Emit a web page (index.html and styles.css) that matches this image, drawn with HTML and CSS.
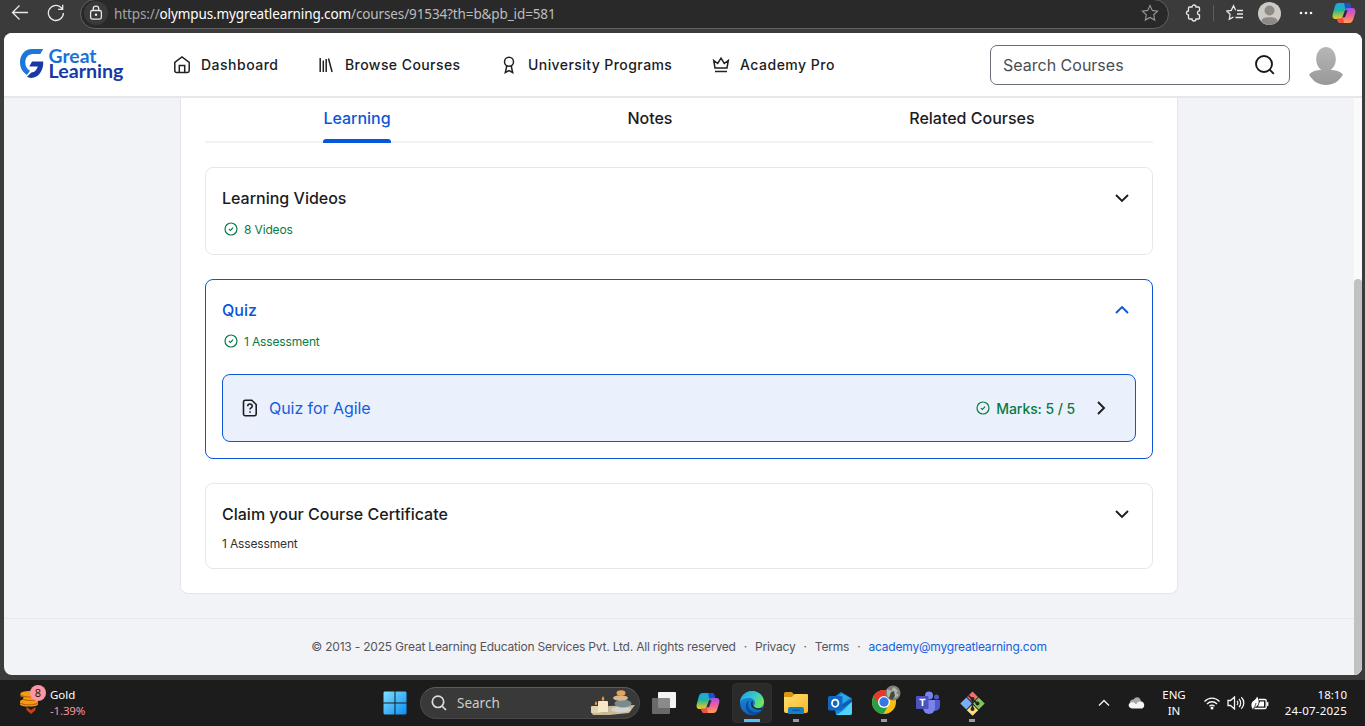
FILE: index.html
```html
<!DOCTYPE html>
<html lang="en">
<head>
<meta charset="utf-8">
<title>Great Learning</title>
<link rel="stylesheet" href="styles.css">
</head>
<body>
<svg width="0" height="0" class="defs">
  <defs>
    <linearGradient id="lg-blue" x1="0" y1="0" x2="0" y2="1"><stop offset="0" stop-color="#1b7fe0"/><stop offset="1" stop-color="#1668cf"/></linearGradient>
    <linearGradient id="win" x1="0" y1="0" x2="1" y2="1"><stop offset="0" stop-color="#7fe0ff"/><stop offset="1" stop-color="#0a8df5"/></linearGradient>
    <linearGradient id="cpA" x1="0" y1="0" x2="0" y2="1"><stop offset="0" stop-color="#17a5f5"/><stop offset=".45" stop-color="#25b59a"/><stop offset="1" stop-color="#f6cf18"/></linearGradient>
    <linearGradient id="cpB" x1="0" y1="0" x2="0" y2="1"><stop offset="0" stop-color="#a352ec"/><stop offset=".5" stop-color="#f1609a"/><stop offset="1" stop-color="#ffa14d"/></linearGradient>
    <linearGradient id="edgeA" x1="0" y1="0" x2="1" y2=".5"><stop offset="0" stop-color="#239be6"/><stop offset=".6" stop-color="#35c8cf"/><stop offset="1" stop-color="#6fe35b"/></linearGradient>
    <linearGradient id="edgeB" x1="0" y1="0" x2="0" y2="1"><stop offset="0" stop-color="#1a8fdd"/><stop offset="1" stop-color="#0d62bd"/></linearGradient>
    <linearGradient id="folder" x1="0" y1="0" x2="1" y2="1"><stop offset="0" stop-color="#ffdf6d"/><stop offset="1" stop-color="#f9b92a"/></linearGradient>
    <symbol id="copilot" viewBox="0 0 24 24">
      <path d="M7 2h8.500c1.500 0 2.300.900 2.800 2.300L19 7h-3c-1.600 0-2.500.900-3 2.500l-2 6C10.400 17.300 9.500 18 8 18H4c-3 0-4-2-3.200-5l2-7.500C3.500 3 4.800 2 7 2z" fill="url(#cpA)"/>
      <path d="M12 2h3.500c1.500 0 2.300.900 2.800 2.300L19 7h-3c-1.200 0-2 .5-2.500 1.500z" fill="#1a4fd0"/>
      <path d="M17 22H8.500c-1.500 0-2.300-.9-2.800-2.300L5 17.500h3c1.600 0 2.500-.9 3-2.500l2-5.500C13.600 7.700 14.500 7 16 7h4c3 0 4 2 3.200 5l-2 6.500C20.500 21 19.200 22 17 22z" fill="url(#cpB)"/>
      <path d="M5 17.500h3c1.300 0 2.200-.7 2.700-1.800L12 22H8.500c-1.500 0-2.300-.9-2.800-2.300z" fill="#ef5340"/>
      <path d="M13.200 9.200h2.400l-2.600 7h-2.500z" fill="#2b2440"/>
    </symbol>
    <symbol id="okay" viewBox="0 0 16 16"><circle cx="8" cy="8" r="6" fill="none" stroke="currentColor" stroke-width="1.200"/><path d="M5.900 8.100l1.500 1.400 2.700-2.800" fill="none" stroke="currentColor" stroke-width="1.200"/></symbol>
    <symbol id="chev" viewBox="0 0 16 16"><path d="M2 5l6 6 6-6" fill="none" stroke="currentColor" stroke-width="1.900"/></symbol>
  </defs>
</svg>

<div class="browser-bar">
  <svg class="back" width="18" height="18" viewBox="0 0 18 18"><path d="M17 8.500H1.500M8.500 1.500l-7 7 7 7"/></svg>
  <svg class="reload" width="18" height="18" viewBox="0 0 18 18"><path d="M16.400 9a7.500 7.500 0 1 1-2.600-5.700l1.900 1.900M15.700.8v4.500h-4.600"/></svg>
  <div class="address">
    <span class="lock"><svg width="14" height="16" viewBox="0 0 14 16"><rect x="1.600" y="5.500" width="10.800" height="8.600" rx="1.800"/><path d="M4.200 5.500V4a2.800 2.800 0 0 1 5.600 0v1.500"/><circle cx="7" cy="9.800" r=".6"/></svg></span>
    <span class="url">https://<b>olympus.mygreatlearning.com</b><i>/courses/91534?th=b&amp;pb_id=581</i></span>
    <svg class="star" width="18" height="18" viewBox="0 0 18 18"><path d="M9 1.500l2.300 4.900 5.300.7-3.900 3.700 1 5.300L9 13.500l-4.700 2.600 1-5.300L1.400 7.100l5.300-.7z"/></svg>
  </div>
  <svg class="puzzle" width="18" height="18" viewBox="0 0 18 18"><path d="M4.500 3H7A2 2 0 0 1 11 3H13.500A1 1 0 0 1 14.500 4V6.800A2 2 0 0 0 14.500 10.800V14A1 1 0 0 1 13.500 15H11A2 2 0 0 1 7 15H4.500A1 1 0 0 1 3.500 14V11A2 2 0 0 1 3.500 7V4A1 1 0 0 1 4.500 3z"/></svg>
  <span class="bar-rule"></span>
  <svg class="favs" width="18" height="18" viewBox="0 0 18 18"><path d="M9.700 6.300L7.500 1.700 5.300 6.300l-4.600.7 3.400 3.300-.8 4.900L7.500 13M11 6.500h6M11 10h6M9.500 13.500H17"/></svg>
  <svg class="profile" width="23" height="23" viewBox="0 0 23 23"><circle cx="11.500" cy="11.500" r="11.500" fill="#cdcac6"/><circle cx="11.500" cy="8.500" r="5" fill="#8e8a86"/><path d="M3.500 19.500c0-3.500 3-4.300 8-4.300s8 .8 8 4.300c-4.500 4.500-11.500 4.500-16 0z" fill="#8e8a86"/></svg>
  <svg class="dots" width="14" height="4" viewBox="0 0 14 4"><circle cx="2" cy="2" r="1.300"/><circle cx="7" cy="2" r="1.300"/><circle cx="12" cy="2" r="1.300"/></svg>
  <svg class="bar-copilot" width="24" height="24"><use href="#copilot"/></svg>
</div>

<div class="page">
  <header class="site-header">
    <svg class="logo" width="106" height="36" viewBox="0 0 106 36">
      <path d="M24.300 1H13C5.500 1 1 7 1 14.300c0 5.500 2.500 10 7 12.700l3-4.300c-3.300-1.800-4.700-4.700-4.700-8.200C6.300 9.500 9.300 6 14 6h7.300z" fill="#1c77d8"/>
      <path d="M13 13.500h11.200c.6 8-4.300 16.500-12 16.500-1.500 0-3-.5-4.200-1.200l4.400-4.200c3.200 0 5.400-2.800 6.400-6h-8.500z" fill="#1739a8"/>
      <text x="29.500" y="14.500" textLength="48" lengthAdjust="spacingAndGlyphs" fill="url(#lg-blue)">Great</text>
      <text x="29.500" y="29.500" textLength="75" lengthAdjust="spacingAndGlyphs" fill="#1739a8">Learning</text>
    </svg>
    <nav class="nav">
      <a><svg width="20" height="20" viewBox="0 0 20 20"><path d="M2.800 7.300L10 2l7.200 5.300v8.500a1.700 1.700 0 0 1-1.700 1.700h-11a1.700 1.700 0 0 1-1.700-1.700zM7.300 17.500v-7h5.400v7"/></svg><span class="n1">Dashboard</span></a>
      <a><svg width="20" height="20" viewBox="0 0 20 20"><path d="M4.200 3v14M7.300 5.500V17M10.200 4v13M12.500 3.500l3.600 13.500"/></svg><span class="n2">Browse Courses</span></a>
      <a><svg width="20" height="20" viewBox="0 0 20 20"><circle cx="10" cy="6.800" r="4.500"/><path d="M7.500 10.600v1.800L6.300 17.500l3.700-2 3.700 2-1.200-5.100v-1.800"/></svg><span class="n3">University Programs</span></a>
      <a><svg width="20" height="20" viewBox="0 0 20 20"><path d="M4 13L2.700 5.500l4 3L10 3.200l3.300 5.300 4-3L16 13zM4 16.500h12"/></svg><span class="n4">Academy Pro</span></a>
    </nav>
    <div class="search"><span>Search Courses</span><svg width="22" height="22" viewBox="0 0 22 22"><circle cx="10" cy="10" r="8"/><path d="M15.800 15.800l4 4"/></svg></div>
    <svg class="avatar" width="36" height="40" viewBox="0 0 36 40"><defs><linearGradient id="av" x1="0" y1="0" x2="0" y2="1"><stop offset="0" stop-color="#b7b7b7"/><stop offset="1" stop-color="#989898"/></linearGradient></defs><path d="M18 1c5.500 0 9.800 5 9.800 12 0 5-2 8.800-5.300 10.700 5.500.3 9.700 1.700 12.500 4.800-4 7-10 10.500-17 10.500S5 35.500 1 28.500c2.800-3.100 7-4.500 12.500-4.800C10.200 21.800 8.200 18 8.200 13 8.200 6 12.500 1 18 1z" fill="url(#av)"/></svg>
  </header>

  <div class="scroller">
    <div class="content">
      <main class="course">
        <div class="tabs"><span class="tab tab-on">Learning</span><span class="tab">Notes</span><span class="tab">Related Courses</span></div>
        <section class="module">
          <div class="module-head"><h3>Learning Videos</h3><svg width="16" height="16"><use href="#chev"/></svg></div>
          <div class="done"><svg width="16" height="16"><use href="#okay"/></svg>8 Videos</div>
        </section>
        <section class="module module-open">
          <div class="module-head"><h3>Quiz</h3><svg class="up" width="16" height="16"><use href="#chev"/></svg></div>
          <div class="done"><svg width="16" height="16"><use href="#okay"/></svg>1 Assessment</div>
          <div class="lesson">
            <svg class="doc" width="16" height="18" viewBox="0 0 16 18"><path d="M3.300 1.200h6.500L14.200 5.500v9.500A1.800 1.800 0 0 1 12.500 16.800H3.300A1.800 1.800 0 0 1 1.500 15V3A1.800 1.800 0 0 1 3.300 1.200z"/><path d="M5.700 7.200c.1-3 4.700-2.800 4.500.1C10.100 9 8 8.800 8 10.600M8 12.300v1.500"/></svg>
            <span class="lesson-name">Quiz for Agile</span>
            <svg class="mark-ok" width="16" height="16"><use href="#okay"/></svg>
            <span class="marks">Marks: 5 / 5</span>
            <svg class="next" width="16" height="16"><use href="#chev"/></svg>
          </div>
        </section>
        <section class="module module-last">
          <div class="module-head"><h3>Claim your Course Certificate</h3><svg width="16" height="16"><use href="#chev"/></svg></div>
          <div class="todo">1 Assessment</div>
        </section>
      </main>
      <footer class="footer"><span class="copy">© 2013 - 2025 Great Learning Education Services Pvt. Ltd. All rights reserved</span><span>·</span><span>Privacy</span><span>·</span><span>Terms</span><span>·</span><a>academy@mygreatlearning.com</a></footer>
    </div>
    <div class="track"><div class="thumb"></div></div>
  </div>
</div>

<div class="taskbar">
  <div class="widget">
    <svg width="28" height="32" viewBox="0 0 28 32"><g fill="#f49a16"><ellipse cx="9" cy="8.500" rx="8.500" ry="2.500"/><rect x=".5" y="8.500" width="17" height="3"/><ellipse cx="10" cy="13" rx="7" ry="2.500"/><ellipse cx="9" cy="16.500" rx="9" ry="3"/><rect y="16.500" width="18" height="3"/><ellipse cx="9" cy="19.300" rx="9" ry="2.300"/></g><path d="M1 10.500c4 2 12 2 16 0M3 14.300c4 1.600 11 1.600 14 0M0 18c4 2.500 14 2.500 18 0" fill="none" stroke="#bd6505" stroke-width="1.200"/><path d="M6.500 22l4.500 3 4.500-3v3L11 29l-4.500-4z" fill="#c94318"/><circle cx="18" cy="8" r="8" fill="#fd96a0"/><text x="18" y="12" text-anchor="middle">8</text></svg>
    <div class="quote"><span>Gold</span><span class="down">-1.39%</span></div>
  </div>
  <div class="apps">
    <svg class="start" width="24" height="24" viewBox="0 0 24 24"><path fill="url(#win)" d="M1.500.5H11.500V11.500H.5V1.500zM12.500.5H22.500L23.500 1.500V11.500H12.500zM.5 12.500H11.500V23.500H1.500L.5 22.500zM12.500 12.500H23.500V22.500L22.500 23.500H12.500z"/></svg>
    <div class="task-search">
      <svg width="16" height="16" viewBox="0 0 16 16"><circle cx="7" cy="6.800" r="5.700"/><path d="M11 11l4 4"/></svg><span>Search</span>
      <svg class="candles" width="46" height="26" viewBox="0 0 46 26">
        <path d="M1 22l18-6 26-1-6 8-20 2H3z" fill="#c9b994"/>
        <rect x="1" y="16" width="10" height="7" rx="1" fill="#e3d3ae"/><rect x="8" y="11" width="10" height="11" rx="1" fill="#f5e8c9"/>
        <path d="M6 11c2 3 1 4 0 4s-2-1 0-4zM13 6c2 3 1.500 4.500 0 4.500S11 9.500 13 6z" fill="#ff9238"/>
        <ellipse cx="31" cy="19.500" rx="10" ry="3" fill="#d4d3d2"/><ellipse cx="33" cy="13.500" rx="8.500" ry="4" fill="#788b90"/><ellipse cx="30.500" cy="8" rx="7.500" ry="2.800" fill="#d9b68c"/><ellipse cx="31" cy="3" rx="4.500" ry="2.700" fill="#e5a45c"/>
      </svg>
    </div>
    <span class="app"><svg width="24" height="22" viewBox="0 0 24 22"><rect x="6" width="18" height="16" rx="1" fill="#f3f3f3"/><rect y="6" width="18" height="16" rx="1" fill="#777" fill-opacity=".85"/></svg></span>
    <span class="app"><svg width="24" height="24"><use href="#copilot"/></svg></span>
    <span class="app app-on"><svg width="26" height="26" viewBox="0 0 26 26"><circle cx="13" cy="13" r="12" fill="url(#edgeB)"/><path d="M1 12C2 5 7 1 13 1c7 0 12 5 12 11 0 4-3 6-6 6-2.500 0-4-1-4-2 0-.8 1-1.300 1-3C16 10 13.500 8 10 8c-4 0-7.500 1.500-9 4z" fill="url(#edgeA)"/><path d="M11 10c-2.300 2-2.700 4.500-1.500 7.500 2 4.500 7 6 12.500 3.700C19 25 13 26 9.500 22.500 5.500 18.500 6 12 11 10z" fill="#0b4a96"/><path d="M13.500 11.500c-1.500 2-.8 4.800 1.500 6.300 2.500 1.600 5.500 1.600 8.300.5" fill="none" stroke="#222" stroke-width="1.300"/></svg></span>
    <span class="app run"><svg width="24" height="22" viewBox="0 0 24 22"><path d="M0 1.500A1.500 1.500 0 0 1 1.500 0H8l2 2.500V6H0z" fill="#d99611"/><path d="M0 5h8l2.500-3H23a1 1 0 0 1 1 1v16a2 2 0 0 1-2 2H2a2 2 0 0 1-2-2z" fill="url(#folder)"/><path d="M4 22v-5a2 2 0 0 1 2-2h12a2 2 0 0 1 2 2v5z" fill="#1680c7"/><path d="M8.500 18.300h7" stroke="#0e5a9e" stroke-width="1.500"/></svg></span>
    <span class="app"><svg width="25" height="23" viewBox="0 0 25 23"><path d="M5 6l8-6 11 6.500V21a2 2 0 0 1-2 2H8z" fill="#1688d8"/><path d="M10 5l4-3.500 8 4.500-9 7z" fill="#29a8ee"/><path d="M24 7v14a2 2 0 0 1-2 2H8c3-1 13-8 16-16z" fill="#50d2f6"/><path d="M13 13L24 6.500V10L12 18z" fill="#0d5dad"/><rect y="4" width="14.500" height="14.500" rx="1.500" fill="#1068c5"/><ellipse cx="7.200" cy="11.200" rx="3.200" ry="3.600" fill="none" stroke="#fff" stroke-width="1.800"/></svg></span>
    <span class="app run"><svg class="chrome" width="30" height="30" viewBox="0 0 30 30"><circle cx="13" cy="17" r="12" fill="#fbbf12"/><path d="M13 17L2.600 11A12 12 0 0 1 23.400 11z" fill="#e5392f"/><path d="M13 17L2.600 11A12 12 0 0 0 12.500 29l5-9z" fill="#24a148"/><path d="M13 11h10.400A12 12 0 0 0 2.600 11l5.200 8.500z" fill="#e5392f"/><circle cx="13" cy="17" r="6" fill="#fff"/><circle cx="13" cy="17" r="4.700" fill="#3478e5"/><circle cx="22" cy="8" r="7.500" fill="#7d8379"/><path d="M16 4l4 2 3-4 4 4-2 2 3 2-4 3-3-3-4 3-1-4z" fill="#b2b5ad"/><path d="M20 7l3-1 1 5-3 4-3-2z" fill="#464b40"/></svg></span>
    <span class="app"><svg width="25" height="24" viewBox="0 0 25 24"><circle cx="20.500" cy="6" r="2.500" fill="#5059c9"/><path d="M17 9h7v6a5 5 0 0 1-5 5h-2z" fill="#5059c9"/><circle cx="13" cy="4.500" r="4" fill="#7b83eb"/><path d="M7 9h12v8a6 6 0 0 1-12 0z" fill="#7b83eb"/><rect y="5" width="12.500" height="13" rx="1" fill="#4b53bc"/><path d="M3.500 8.500h6M6.500 8.500v6.500" stroke="#fff" stroke-width="1.700"/></svg></span>
    <span class="app run"><svg width="25" height="25" viewBox="0 0 25 25"><path d="M12.500.5L18 6l-5.500 5.500L7 6z" fill="#f36f6d"/><path d="M6.300 6.500l5.700 6-5.700 6-6-6z" fill="#78adfa"/><path d="M18.700 6.500l6 6-6 6-6-6z" fill="#7fc857"/><path d="M12.500 13.500l5.700 5.700-5.700 5.500-5.700-5.500z" fill="#ffe078"/><path d="M8.500 4.500l4 4v10M12.500 9l6 4" stroke="#272525" stroke-width="1.700" fill="none"/><circle cx="12.500" cy="8" r="2" fill="#272525"/><circle cx="17.500" cy="12.500" r="2" fill="#272525"/><circle cx="12.500" cy="18" r="2" fill="#272525"/></svg></span>
  </div>
  <div class="tray">
    <svg class="tray-up" width="12" height="8" viewBox="0 0 12 8"><path d="M1 6.500l5-5 5 5"/></svg>
    <svg class="cloud" width="17" height="12" viewBox="0 0 17 12"><path d="M3 9C0 4 4 2 5.500 2.500 8-1 12-.5 13 4z" fill="#aaa"/><path d="M4 11.500c-4-.5-4.500-5-1-6 3-1 4 1 5 1.500C10 3.500 15 3 16 7c.8 3-1 4.500-3 4.500z" fill="#f5f5f5"/></svg>
    <div class="lang"><span>ENG</span><span>IN</span></div>
    <svg class="wifi" width="18" height="14" viewBox="0 0 18 14"><path d="M1.500 5.500c4.200-4.500 10.800-4.500 15 0M4 8c2.800-3 7.200-3 10 0M6.500 10.300c1.400-1.500 3.600-1.500 5 0"/><circle cx="9" cy="12" r="1.500"/></svg>
    <svg class="sound" width="18" height="14" viewBox="0 0 18 14"><path d="M1 4.500h2.500L7.500 1v12L3.500 9.500H1zM10 5c1 1 1 3 0 4M12 3c2.200 2 2.200 6 0 8M14.300 1.300c3.300 3 3.300 8.400 0 11.400"/></svg>
    <svg class="battery" width="18" height="15" viewBox="0 0 18 15"><path d="M8 3.500h6a1.200 1.200 0 0 1 1.200 1.200v6.600a1.200 1.200 0 0 1-1.200 1.200H3.500M16.700 6v4" fill="none" stroke="#fff" stroke-width="1.300"/><path d="M9 5.500h4v5H7z" fill="#fff"/><path d="M6 .5c2.700 4 2.300 9-2 10.500L2 13.500 1 12C-.5 8 1 6 3 4.500 4.800 3.200 5.800 2 6 .5z" fill="#fff"/><path d="M1.500 13.500c2-2 3-4 3.500-6.500" fill="none" stroke="#222" stroke-width=".8"/></svg>
    <div class="clock"><span class="time">18:10</span><span class="date">24-07-2025</span></div>
  </div>
</div>
</body>
</html>
```

FILE: styles.css
```css
* { box-sizing: border-box; }
html, body { margin: 0; height: 100%; }
body { display: flex; flex-direction: column; height: 726px; overflow: hidden; background: #3b3b3b; font-family: Inter, "Liberation Sans", sans-serif; color: #1b1c1f; }
svg { display: block; flex: none; fill: none; }
.defs { position: absolute; }
span, a, h3 { white-space: nowrap; }

/* browser toolbar */
.browser-bar { display: flex; height: 33px; flex: none; align-items: flex-start; stroke: #e8e8e8; stroke-width: 1.3; }
.back { margin: 4px 0 0 11px; }
.reload { margin: 4px 0 0 18px; }
.address { display: flex; width: 1089px; height: 30px; margin: -1px 0 0 15px; padding: 0 9px 0 3px; border: 1px solid #626262; border-radius: 15px; background: #292929; align-items: center; }
.address > svg, .lock { margin-top: -2px; }
.lock { display: flex; width: 24px; height: 24px; border-radius: 50%; background: #3a3a3a; align-items: center; justify-content: center; }
.url { flex: 1; margin: -1px 0 0 6px; font: 13.5px/20px "Noto Sans", sans-serif; color: #a4a4a4; letter-spacing: -.12px; }
.url b { font-weight: 400; color: #fff; }
.url i { font-style: normal; color: #bcbcbc; }
.star { stroke: #969696; stroke-width: 1.1; }
.puzzle { margin: 4px 0 0 16px; }
.bar-rule { width: 1px; height: 16px; margin: 5px 0 0 10px; background: #5c5c5c; }
.favs { margin: 4px 0 0 12px; }
.profile { margin: 2px 0 0 14px; stroke: none; }
.dots { margin: 11px 0 0 18px; fill: #f2f2f2; stroke: none; }
.bar-copilot { margin: 1px 0 0 19px; stroke: none; }

/* site */
.page { display: flex; flex-direction: column; width: 1358px; height: 642px; margin-left: 4px; flex: none; overflow: hidden; border-radius: 8px; background: #f2f3f7; }
.site-header { display: flex; height: 65px; flex: none; align-items: flex-start; background: #fff; border-bottom: 2px solid #e7e7e8; }
.logo { margin: 15px 0 0 15px; overflow: visible; font: 700 18.5px Lato, sans-serif; stroke-width: .3; }
.nav { display: grid; grid-template-columns: 144px 183px 212px 279px; margin: 22px 0 0 47px; font-size: 14px; font-weight: 500; line-height: 20px; }
.nav a { display: flex; gap: 9px; }
.nav svg { stroke: #202124; stroke-width: 1.5; }
.n1, .n4 { letter-spacing: .5px; }
.n2, .n3 { letter-spacing: .43px; }
.search { display: flex; width: 300px; height: 40px; margin: 12px 0 0 0; padding: 0 13px 0 12px; border: 1px solid #6d6d78; border-radius: 7px; align-items: center; justify-content: space-between; font-size: 16px; color: #4b4c55; }
.search svg { stroke: #17181a; stroke-width: 1.9; }
.avatar { margin: 13px 0 0 18px; }
.scroller { display: flex; flex: 1; }
.content { width: 1350px; }
.track { width: 8px; background: #fafafa; padding-top: 181px; }
.thumb { height: 396px; background: #c1c1c1; border-radius: 4px 4px 0 0; }
.course { display: flex; flex-direction: column; gap: 24px; width: 998px; height: 496px; margin-left: 176px; padding: 0 24px 24px; border: 1px solid #e5e6ea; border-top: 0; border-radius: 0 0 8px 8px; background: #fff; }
.tabs { display: flex; justify-content: space-around; height: 45px; flex: none; border-bottom: 2px solid #f2f2f3; font-size: 16px; font-weight: 500; line-height: 24px; }
.tab { height: 45px; padding-top: 8px; }
.tab-on { display: flex; flex-direction: column; justify-content: space-between; color: #0b57d8; }
.tab-on::after { content: ""; height: 4px; border-radius: 3px 3px 0 0; background: #0757db; }
.module { height: 88px; flex: none; padding: 18px 16px 16px; border: 1px solid #e7e7ea; border-radius: 8px; }
.module-head { display: flex; justify-content: space-between; align-items: center; height: 24px; padding-right: 6px; }
.module-head h3 { margin: 0; font-size: 16px; font-weight: 500; line-height: 24px; }
.up { transform: rotate(180deg); }
.done { display: flex; align-items: center; gap: 5px; height: 20px; margin-top: 9px; padding-left: 1px; font-size: 12px; letter-spacing: -.15px; color: #0a7a43; }
.todo { margin-top: 8px; font-size: 12px; letter-spacing: -.15px; line-height: 20px; color: #303136; }
.module-open { height: 180px; border-color: #0b57d8; }
.module-open .module-head { color: #0b57d8; }
.module-last { height: 86px; }
.lesson { display: flex; align-items: center; height: 68px; margin-top: 23px; padding: 0 26px 0 19px; border: 1px solid #0b57d8; border-radius: 8px; background: #eaf1fc; }
.doc { stroke: #1d1e20; stroke-width: 1.6; }
.lesson-name { flex: 1; margin-left: 11px; font-size: 16px; letter-spacing: -.06px; color: #165ddd; }
.mark-ok { color: #0a7a43; }
.marks { margin-left: 5px; font-size: 14px; font-weight: 500; letter-spacing: -.08px; color: #0a7a43; }
.next { margin-left: 18px; transform: rotate(-90deg); }
.footer { display: flex; justify-content: center; gap: 8px; margin-top: 24px; padding-top: 18px; border-top: 1px solid #e7e8ec; font-size: 12px; letter-spacing: -.2px; line-height: 20px; color: #54555c; }
.footer a { color: #1762dd; }

/* taskbar */
.taskbar { display: flex; height: 46px; margin-top: 5px; flex: none; background: #1c1c1c; font: 11.5px/16px "Noto Sans", sans-serif; color: #fff; }
.widget { display: flex; width: 383px; padding: 5px 0 0 20px; }
.widget text { font: 11px "Noto Sans", sans-serif; fill: #26171a; }
.quote { display: flex; flex-direction: column; margin: 2px 0 0 2px; }
.down { color: #fb929c; letter-spacing: -.15px; }
.apps { display: flex; width: 705px; }
.start { margin-top: 11px; }
.task-search { display: flex; align-items: center; width: 220px; height: 32px; margin: 7px 2px 0 13px; padding: 0 3px 0 10px; border: 1px solid #484848; border-top-color: #5c5c5c; border-radius: 16px; background: #393939; font-size: 13.5px; color: #ccc; }
.task-search > svg:first-child { stroke: #ddd; stroke-width: 1.7; }
.task-search span { flex: 1; margin-left: 10px; }
.app { display: flex; width: 40px; height: 40px; margin: 3px 2px 0; border-radius: 4px; align-items: center; justify-content: center; background: linear-gradient(#9a9a9a, #9a9a9a) 50% 36px / 0 3px no-repeat; }
.run { background-size: 6px 3px; }
.app-on { background: linear-gradient(#55bdf7, #55bdf7) 50% 35px / 16px 3px no-repeat #2b2b2b; border: 1px solid #303030; }
.chrome { margin: -6px 0 0 4px; }
.tray { display: flex; align-items: center; flex: 1; padding-left: 10px; stroke-width: 1.3; }
.tray-up, .wifi, .sound { stroke: #f4f4f4; }
.wifi { margin-left: 17px; }
.wifi circle { fill: #fff; stroke: none; }
.cloud { margin-left: 18px; }
.lang { display: flex; flex-direction: column; align-items: center; width: 24px; margin-left: 17px; }
.sound { margin-left: 6px; }
.battery { margin-left: 6px; }
.clock { display: flex; flex-direction: column; align-items: flex-end; width: 78px; }
.date { letter-spacing: .23px; }
```
